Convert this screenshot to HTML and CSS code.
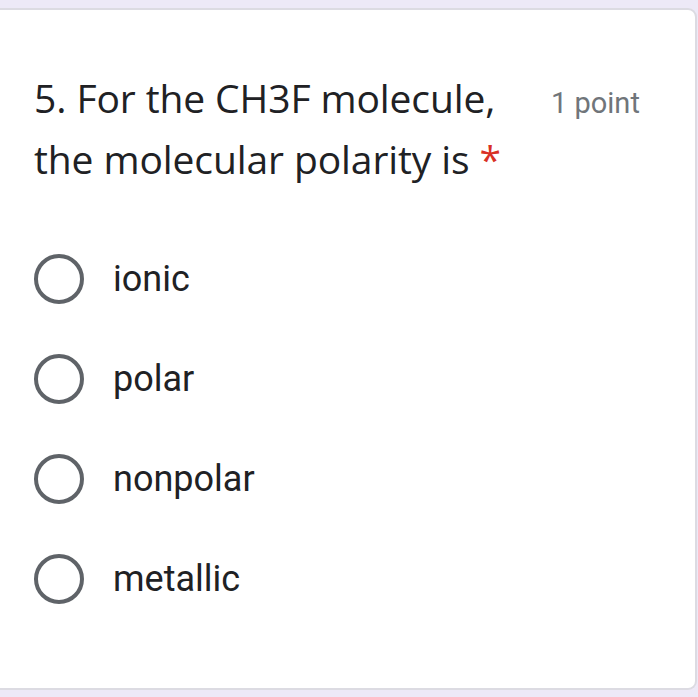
FILE: index.html
```html
<!DOCTYPE html>
<html>
<head>
<meta charset="utf-8">
<link rel="stylesheet" href="styles.css">
</head>
<body>
<div class="page">
  <div class="card">
    <div class="header">
      <div class="title">5. For the CH3F molecule, the molecular polarity is <span class="req">*</span></div>
      <div class="points">1 point</div>
    </div>
    <div class="options">
      <div class="option"><span class="radio"></span><span class="label">ionic</span></div>
      <div class="option"><span class="radio"></span><span class="label">polar</span></div>
      <div class="option"><span class="radio"></span><span class="label">nonpolar</span></div>
      <div class="option"><span class="radio"></span><span class="label">metallic</span></div>
    </div>
  </div>
</div>
</body>
</html>
```

FILE: styles.css
```css
html, body {
  margin: 0;
  padding: 0;
  background: #ede9f7;
}
.page {
  padding-top: 8px;
  height: 697px;
  box-sizing: border-box;
}
.card {
  width: 697px;
  height: 682px;
  box-sizing: border-box;
  background: #fff;
  border: 2px solid #dcdbe2;
  border-left: none;
  border-radius: 0 9px 9px 0;
  padding: 57px 0 0 34px;
}
.header {
  display: flex;
  align-items: flex-start;
}
.title {
  width: 490px;
  font-family: "Open Sans", sans-serif;
  font-size: 39px;
  line-height: 61px;
  color: #202124;
  letter-spacing: -0.1px;
}
.req {
  color: #d93025;
}
.points {
  margin-left: 27px;
  padding-top: 19px;
  font-family: Roboto, sans-serif;
  font-size: 29px;
  color: #70757a;
  white-space: nowrap;
}
.options {
  margin-top: 40px;
  display: flex;
  flex-direction: column;
}
.option {
  display: flex;
  align-items: center;
  height: 100px;
}
.radio {
  width: 42px;
  height: 42px;
  border: 4px solid #5f6368;
  border-radius: 50%;
  flex: none;
}
.label {
  margin-left: 29px;
  font-family: Roboto, sans-serif;
  font-size: 36px;
  color: #202124;
}
```
